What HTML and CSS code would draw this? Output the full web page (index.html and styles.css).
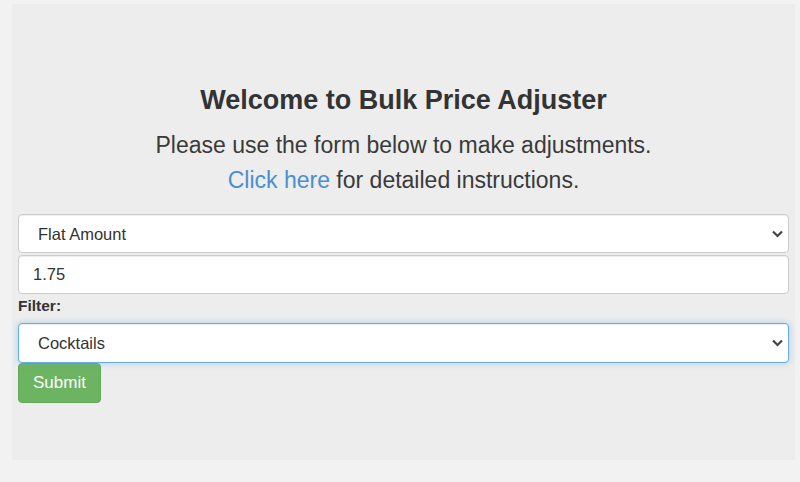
FILE: index.html
```html
<!DOCTYPE html>
<html lang="en">

<head>
    <meta charset="UTF-8">
    <meta name="viewport" content="width=device-width, initial-scale=1.0">
    <title>Bulk Price Adjuster</title>
    <link rel="stylesheet" href="styles.css">
</head>

<body>
    <div class="jumbotron">
        <h2>Welcome to Bulk Price Adjuster</h2>
        <p class="lead">Please use the form below to make adjustments.<br>
            <a href="#">Click here</a> for detailed instructions.</p>

        <form class="adjust-form">
            <div class="select-wrap">
                <select class="form-control">
                    <option>Flat Amount</option>
                    <option>Percentage</option>
                </select>
                <svg class="chevron" width="11" height="8" viewBox="0 0 11 8">
                    <path d="M1 1.5 L5.5 6 L10 1.5" fill="none" stroke="#444" stroke-width="2.2" />
                </svg>
            </div>
            <input type="text" class="form-control text-input" value="1.75">
            <label class="filter-label">Filter:</label>
            <div class="select-wrap">
                <select class="form-control focused">
                    <option>Cocktails</option>
                    <option>Beer</option>
                    <option>Wine</option>
                </select>
                <svg class="chevron" width="11" height="8" viewBox="0 0 11 8">
                    <path d="M1 1.5 L5.5 6 L10 1.5" fill="none" stroke="#444" stroke-width="2.2" />
                </svg>
            </div>
            <div class="actions">
                <button type="button" class="btn-success">Submit</button>
            </div>
        </form>
    </div>
</body>

</html>
```

FILE: styles.css
```css
body {
    font-family: "Liberation Sans", Arial, sans-serif;
    background-color: #f2f2f2;
    color: #333;
    margin: 0;
    padding: 4px 5px 22px 12px;
}

.jumbotron {
    background-color: #ededed;
    height: 456px;
    box-sizing: border-box;
    padding: 81px 6px 0 6px;
}

h2 {
    font-size: 27px;
    font-weight: bold;
    text-align: center;
    margin: 0 0 13px 0;
    line-height: 30px;
}

.lead {
    font-size: 23px;
    font-weight: 300;
    text-align: center;
    line-height: 35px;
    margin: 0 0 16px 0;
    color: #3a3a3a;
}

.lead a {
    color: #4a8fd0;
    text-decoration: none;
}

.adjust-form {
    display: flex;
    flex-direction: column;
    gap: 1px;
}

.select-wrap {
    position: relative;
}

.form-control {
    display: block;
    width: 100%;
    height: 39px;
    box-sizing: border-box;
    font-family: "Liberation Sans", Arial, sans-serif;
    font-size: 16.5px;
    color: #333;
    background-color: #fff;
    border: 1px solid #ccc;
    border-radius: 4px;
    box-shadow: inset 0 1px 1px rgba(0, 0, 0, 0.075);
    outline: none;
}

select.form-control {
    appearance: none;
    -webkit-appearance: none;
    padding: 0 30px 0 19px;
}

.text-input {
    margin-top: 1px;
    padding: 0 14px;
}

.form-control.focused {
    height: 40px;
    border-color: #66afe9;
    box-shadow: inset 0 1px 1px rgba(0, 0, 0, 0.075), 0 0 6px rgba(102, 175, 233, 0.5);
}

.chevron {
    position: absolute;
    right: 6px;
    top: 50%;
    margin-top: -4px;
    pointer-events: none;
}

.filter-label {
    font-size: 15.5px;
    font-weight: bold;
    margin: 1px 0 6px 0;
    line-height: 20px;
}

.actions {
    margin-top: -1px;
}

.btn-success {
    font-family: "Liberation Sans", Arial, sans-serif;
    font-size: 17px;
    color: #fff;
    background-color: #6cb462;
    border: 1px solid #62a958;
    border-radius: 4px;
    width: 83px;
    height: 40px;
    padding: 0;
    cursor: pointer;
}
```
